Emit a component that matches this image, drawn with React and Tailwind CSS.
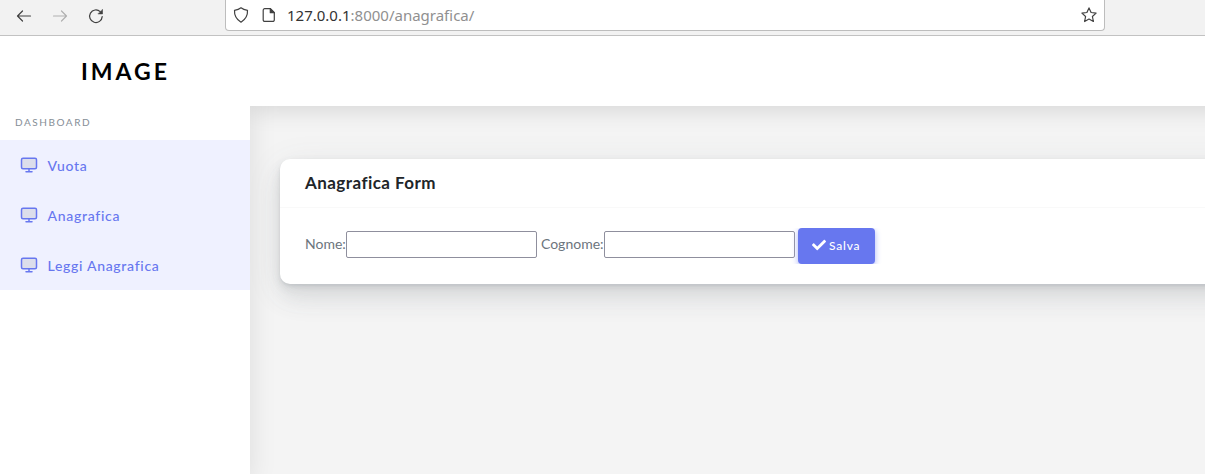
import React from "react";

const line = { fill: "none", stroke: "currentColor", strokeLinecap: "round", strokeLinejoin: "round" };

function MonitorIcon() {
  return (
    <svg width="18" height="18" viewBox="0 0 24 24" strokeWidth="2" {...line} className="shrink-0">
      <rect x="2" y="3" width="20" height="14" rx="2" fill="#dcdeeb" />
      <path d="M8 21h8M12 17v4" />
    </svg>
  );
}

function BrowserBar() {
  return (
    <div className="flex h-9 shrink-0 items-start border-b border-[#c2c2c2] bg-[#f2f2f2] text-[#414141]">
      <div className="flex h-[31px] w-[225px] shrink-0 items-center gap-5 pl-4">
        <svg width="16" height="16" viewBox="0 0 16 16" strokeWidth="1.2" {...line}>
          <path d="M14.500 8H1.600M6.500 3 1.500 8l5 5" />
        </svg>
        <svg width="16" height="16" viewBox="0 0 16 16" strokeWidth="1.2" {...line} className="text-[#b0b0b0]">
          <path d="M1.500 8h12.900M9.500 3l5 5-5 5" />
        </svg>
        <svg width="16" height="16" viewBox="0 0 16 16" strokeWidth="1.200" {...line}>
          <path d="M14.200 8.600A6.300 6.300 0 1 1 12.200 3.600" />
          <path d="M14.500 1.700v4.200h-4.200z" fill="currentColor" strokeWidth="0.600" />
        </svg>
      </div>
      <div className="flex h-[31px] w-[880px] shrink-0 items-center rounded-b border-x border-b border-[#bdbdbd] bg-white pr-[7px] pl-[7px]">
        <svg width="16" height="16" viewBox="0 0 16 16" strokeWidth="1.2" {...line}>
          <path d="M8 .8c1.800 1.400 3.900 2.100 6.500 2.500.3 4.900-1.800 9.100-6.500 11.900C3.300 12.400 1.200 8.200 1.500 3.300 4.100 2.900 6.200 2.200 8 .8z" />
        </svg>
        <svg width="16" height="16" viewBox="0 0 16 16" strokeWidth="1.2" {...line} className="ml-3">
          <path d="M3.700 1.700h5.600l4 4v7.200a1.500 1.500 0 0 1-1.500 1.500H3.700a1.500 1.500 0 0 1-1.500-1.500V3.200a1.500 1.500 0 0 1 1.500-1.500z" />
          <path d="M9.300 1.700v4h4z" fill="currentColor" />
        </svg>
        <span className="ml-2.5 text-[15px] leading-5 whitespace-nowrap text-[#909090] [font-family:'Noto_Sans',sans-serif]">
          <span className="text-[#333]">127.0.0.1</span>:8000/anagrafica/
        </span>
        <svg width="16" height="16" viewBox="0 0 16 16" strokeWidth="1.2" {...line} className="ml-auto">
          <path d="M8 .9l2.100 4.600 5 .6-3.700 3.400 1 5L8 12l-4.400 2.500 1-5L.9 6.100l5-.6z" />
        </svg>
      </div>
    </div>
  );
}

function NavItem({ children }) {
  return (
    <a className="flex h-[50px] items-center bg-[#eff1ff] pl-5 text-[#6777ef]">
      <MonitorIcon />
      <span className="ml-[9.5px] pt-px text-[14px] leading-5 font-medium tracking-[0.7px] whitespace-nowrap">{children}</span>
    </a>
  );
}

function Sidebar() {
  return (
    <aside className="relative z-10 w-[250px] shrink-0 bg-white shadow-[0_8px_26px_0_rgba(0,0,0,0.10)]">
      <div className="flex h-[70px] items-center pl-[81px] text-[23px] font-bold tracking-[3px] text-black">
        <span>IMAGE</span>
      </div>
      <div className="flex h-8 items-center pl-[15px] text-[10px] tracking-[1.55px] text-[#868e96]">DASHBOARD</div>
      <nav className="mt-0.5">
        <NavItem>Vuota</NavItem>
        <NavItem>Anagrafica</NavItem>
        <NavItem>Leggi Anagrafica</NavItem>
      </nav>
    </aside>
  );
}

function FormCard() {
  return (
    <section className="mt-[53px] -mr-20 ml-[30px] h-[125px] rounded-l-[10px] bg-white shadow-[0_7.5px_35px_rgba(90,97,105,0.1),0_15px_22.500px_rgba(90,97,105,0.1),0_4px_8.500px_rgba(90,97,105,0.12),0_2px_3px_rgba(90,97,105,0.1)]">
      <header className="flex h-[49px] items-center border-b border-[#f9f9f9] pl-[25px]">
        <h4 className="text-[17px] leading-7 font-bold tracking-[0.45px] whitespace-nowrap text-[#212529]">Anagrafica Form</h4>
      </header>
      <form className="flex pt-5 pl-[25px] text-[14px] text-[#6c757d]" onSubmit={(e) => e.preventDefault()}>
        <label className="flex items-center">
          <span className="w-[41px] whitespace-nowrap pb-[5px]">Nome:</span>
          <input className="mb-[3px] h-[27px] w-[191px] rounded-xs border border-[#8f8f9d] bg-white px-1 outline-none" />
        </label>
        <label className="ml-[3px] flex items-center">
          <span className="w-[64px] whitespace-nowrap pb-[5px] pl-px">Cognome:</span>
          <input className="mb-[3px] h-[27px] w-[191px] rounded-xs border border-[#8f8f9d] bg-white px-1 outline-none" />
        </label>
        <button className="ml-[3px] flex h-9 w-[77px] items-center rounded bg-[#6777ef] pl-[14px] text-[12px] font-medium tracking-[0.8px] text-white shadow-[0_2px_6px_#acb5f6] [clip-path:inset(0_-8px)]">
          <svg width="14" height="14" viewBox="0 0 512 512" fill="currentColor" className="-mt-0.5">
            <path d="M173.900 439.400l-166.400-166.400c-10-10-10-26.200 0-36.200l36.200-36.200c10-10 26.200-10 36.200 0L192 312.700 432.100 72.600c10-10 26.200-10 36.200 0l36.200 36.200c10 10 10 26.200 0 36.200L210.100 439.400c-10 10-26.200 10-36.200 0z" />
          </svg>
          <span className="ml-[3px]">Salva</span>
        </button>
      </form>
    </section>
  );
}

export default function App() {
  return (
    <div className="flex h-[474px] w-full flex-col overflow-hidden bg-[#f4f4f4] [font-family:Lato,sans-serif]">
      <BrowserBar />
      <div className="flex min-h-0 flex-1 overflow-hidden">
        <Sidebar />
        <main className="min-w-0 flex-1">
          <div className="relative z-20 -mr-20 h-[70px] bg-white shadow-[0_4px_25px_0_rgba(0,0,0,0.12)] [clip-path:inset(0_0_-50px_0)]" />
          <FormCard />
        </main>
      </div>
    </div>
  );
}
